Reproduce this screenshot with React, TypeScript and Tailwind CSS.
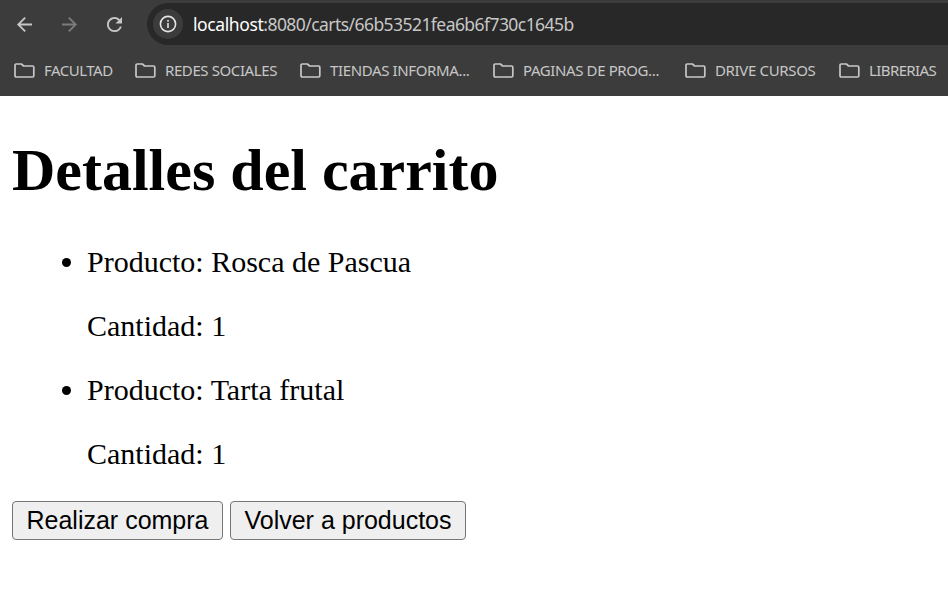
import React from "react";

const bookmarks = [
  { label: "FACULTAD", item: "w-[121px]", tracking: "tracking-[-0.5px]" },
  { label: "REDES SOCIALES", item: "w-[165px]", tracking: "tracking-[-0.4px]" },
  { label: "TIENDAS INFORMA...", item: "w-[193px]", tracking: "tracking-[-0.37px]" },
  { label: "PAGINAS DE PROG...", item: "w-[192px]", tracking: "tracking-[-0.39px]" },
  { label: "DRIVE CURSOS", item: "w-[154px]", tracking: "tracking-[-0.34px]" },
  { label: "LIBRERIAS", item: "w-[110px]", tracking: "tracking-[-0.6px]" },
];

const products = ["Rosca de Pascua", "Tarta frutal"];

function Folder() {
  return (
    <svg className="w-[21px] h-[15px] shrink-0" viewBox="0 0 21 15" fill="none" stroke="#c7c7c7" strokeWidth="1.7" strokeLinejoin="round">
      <path d="M1 2.2Q1 1 2.2 1H7.4L9.6 3H18.6Q19.8 3 19.8 4.2V12.8Q19.8 14 18.6 14H2.2Q1 14 1 12.8Z" />
    </svg>
  );
}

export default function App() {
  return (
    <div className="w-[948px] h-[601px] overflow-hidden bg-white">
      <header className="h-24 bg-[#3c3c3c] font-['Noto_Sans',sans-serif]">
        <div className="h-12 flex items-center pl-[17px]">
          <svg className="w-[15px] h-[15px] shrink-0" viewBox="4 4 16 16" fill="#c7c7c7"><path d="M20 11H7.83l5.59-5.59L12 4l-8 8 8 8 1.41-1.41L7.83 13H20v-2z" /></svg>
          <svg className="w-[15px] h-[15px] shrink-0 ml-[30px]" viewBox="4 4 16 16" fill="#7c7c7c"><path d="M12 4l-1.41 1.41L16.17 11H4v2h12.17l-5.58 5.59L12 20l8-8z" /></svg>
          <svg className="w-[15px] h-[15px] shrink-0 ml-[30px]" viewBox="4 4 16 16" fill="#c7c7c7"><path d="M17.65 6.35A7.958 7.958 0 0 0 12 4c-4.42 0-7.99 3.58-7.99 8s3.57 8 7.99 8c3.73 0 6.84-2.55 7.73-6h-2.08A5.99 5.99 0 0 1 12 18c-3.31 0-6-2.69-6-6s2.69-6 6-6c1.66 0 3.14.69 4.22 1.78L13 11h7V4l-2.35 2.35z" /></svg>
          <div className="h-[42px] flex-1 ml-[25px] rounded-l-full bg-[#282828] flex items-center pl-[6px]">
            <div className="w-[30px] h-[30px] rounded-full bg-[#3c3c3c] flex items-center justify-center">
              <svg className="w-[18px] h-[18px]" viewBox="0 0 18 18" fill="none" stroke="#e3e3e3" strokeWidth="1.6"><circle cx="9" cy="9" r="7.6" /><path d="M9 8v5M9 5v1.7" /></svg>
            </div>
            <span className="ml-[10px] whitespace-nowrap text-[17.5px] leading-6 tracking-[-0.56px] text-[#c7c7c7]">
              <span className="text-white tracking-[-0.4px]">localhost</span>:8080/carts/66b53521fea6b6f730c1645b
            </span>
          </div>
        </div>
        <nav className="h-[45px] flex items-center pl-[14px] text-[15px] leading-[19px] text-[#c7c7c7]">
          {bookmarks.map((b) => (
            <div key={b.label} className={`${b.item} shrink-0 flex items-center gap-[9px]`}>
              <Folder />
              <span className={`${b.tracking} whitespace-nowrap`}>{b.label}</span>
            </div>
          ))}
        </nav>
      </header>
      <main className="pl-3 pt-[39px] text-black font-['Liberation_Serif',serif]">
        <h1 className="text-[60px] leading-[70px] font-bold">Detalles del carrito</h1>
        <ul className="pl-[75px] pt-10 text-[30px] leading-[34px]">
          {products.map((p) => (
            <li key={p} className="list-disc mb-[30px]">
              <p>Producto: {p}</p>
              <p className="mt-[30px]">Cantidad: 1</p>
            </li>
          ))}
        </ul>
        <div className="flex gap-[7px] font-['Liberation_Sans',sans-serif] text-[25px] leading-[37px]">
          <button className="w-[211px] h-[39px] rounded-[4px] border border-[#767676] bg-[#efefef]">Realizar compra</button>
          <button className="w-[236px] h-[39px] rounded-[4px] border border-[#767676] bg-[#efefef]">Volver a productos</button>
        </div>
      </main>
    </div>
  );
}
